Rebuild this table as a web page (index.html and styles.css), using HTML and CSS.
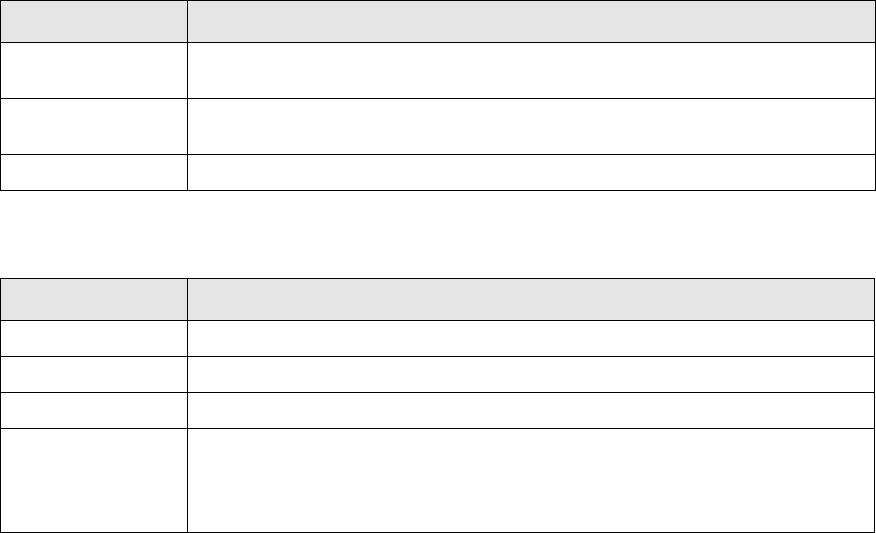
FILE: index.html
```html
<!DOCTYPE html>
<html>
<head>
<meta charset="utf-8">
<link rel="stylesheet" href="styles.css">
</head>
<body>
<table class="grid grid-first">
  <colgroup><col class="col-key"><col></colgroup>
  <thead><tr class="h42"><th></th><th></th></tr></thead>
  <tbody>
    <tr class="h56"><td></td><td></td></tr>
    <tr class="h56"><td></td><td></td></tr>
    <tr class="h36"><td></td><td></td></tr>
  </tbody>
</table>
<table class="grid grid-second">
  <colgroup><col class="col-key"><col></colgroup>
  <thead><tr class="h42"><th></th><th></th></tr></thead>
  <tbody>
    <tr class="h36"><td></td><td></td></tr>
    <tr class="h36"><td></td><td></td></tr>
    <tr class="h36"><td></td><td></td></tr>
    <tr class="h104"><td></td><td></td></tr>
  </tbody>
</table>
</body>
</html>
```
FILE: styles.css
```css
html, body {
  margin: 0;
  padding: 0;
  background: #ffffff;
  font-family: "Liberation Sans", Arial, sans-serif;
  font-size: 13px;
}
.grid {
  border-collapse: collapse;
  table-layout: fixed;
}
.grid-first {
  width: 876px;
}
.grid-second {
  width: 875px;
  margin-top: 87px;
}
.col-key {
  width: 187px;
}
.grid th,
.grid td {
  border: 1px solid #000000;
  padding: 0;
}
.grid th {
  background: #e5e5e5;
}
.h42 { height: 42px; }
.h56 { height: 56px; }
.h36 { height: 36px; }
.h104 { height: 104px; }
```
